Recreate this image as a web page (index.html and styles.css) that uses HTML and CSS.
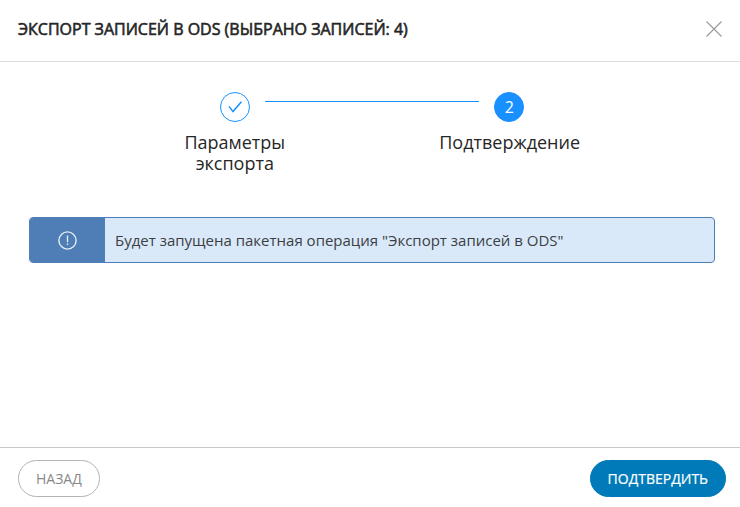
FILE: index.html
```html
<!DOCTYPE html>
<html lang="ru">
<head>
    <meta charset="UTF-8">
    <meta name="viewport" content="width=device-width, initial-scale=1.0">
    <title>Экспорт записей в ODS</title>
    <link rel="stylesheet" href="styles.css">
</head>
<body>
    <div class="modal" role="dialog" aria-labelledby="modalTitle">
        <header class="modal-header">
            <h1 class="modal-title" id="modalTitle">ЭКСПОРТ ЗАПИСЕЙ В ODS (ВЫБРАНО ЗАПИСЕЙ: 4)</h1>
            <button type="button" class="close-btn">
                <svg width="16" height="16" viewBox="0 0 16 16" fill="none" stroke="#999" stroke-width="1.1">
                    <path d="M0.5 0.5L15.5 15.5M15.5 0.5L0.5 15.5"/>
                </svg>
            </button>
        </header>

        <main class="modal-body">
            <ol class="steps">
                <li class="step step-done">
                    <span class="step-icon">
                        <svg width="14" height="12" viewBox="0 0 14 12" fill="none" stroke="#1890ff" stroke-width="1.5">
                            <path d="M1 5.4L5 10.6L13.4 0.8"/>
                        </svg>
                    </span>
                    <span class="step-label">Параметры экспорта</span>
                </li>
                <li class="step step-active">
                    <span class="step-icon">2</span>
                    <span class="step-label">Подтверждение</span>
                </li>
            </ol>

            <div class="alert">
                <div class="alert-icon">
                    <svg width="19" height="19" viewBox="0 0 19 19" fill="none" stroke="#e4ecf5" stroke-width="1.4">
                        <circle cx="9.5" cy="9.5" r="8.6"/>
                        <path d="M9.5 4.6V11.2M9.5 12.4V14"/>
                    </svg>
                </div>
                <p class="alert-text">Будет запущена пакетная операция "Экспорт записей в ODS"</p>
            </div>
        </main>

        <footer class="modal-footer">
            <button type="button" class="btn">НАЗАД</button>
            <button type="button" class="btn btn-primary">ПОДТВЕРДИТЬ</button>
        </footer>
    </div>
</body>
</html>
```

FILE: styles.css
```css
* {
    box-sizing: border-box;
}
body {
    margin: 0;
    background: #fff;
    color: #262626;
    font-family: "Open Sans", "Noto Sans", sans-serif;
}
.modal {
    display: flex;
    flex-direction: column;
    min-height: 100vh;
}
.modal-header {
    display: flex;
    align-items: center;
    justify-content: space-between;
    padding: 17px 18px 20px;
    border-bottom: 1px solid #dedede;
}
.modal-title {
    margin: 0;
    font-size: 16px;
    font-weight: 400;
    line-height: 24px;
    -webkit-text-stroke: 0.6px currentColor;
}
.close-btn {
    display: flex;
    padding: 0;
    border: none;
    background: none;
    cursor: pointer;
}
.modal-body {
    flex: 1;
    padding: 30px 25px 30px 29px;
}
.steps {
    display: flex;
    width: 80%;
    min-height: 125px;
    margin: 0 auto;
    padding: 0;
    list-style: none;
}
.step {
    display: flex;
    flex: 1;
    flex-direction: column;
    align-items: center;
    position: relative;
}
/* line between two steps */
.step + .step::before {
    content: "";
    position: absolute;
    top: 9px;
    right: calc(50% + 30px);
    width: calc(100% - 60px);
    height: 1px;
    background: #1890ff;
}
.step-icon {
    display: flex;
    align-items: center;
    justify-content: center;
    width: 30px;
    height: 30px;
    border: 1px solid #1890ff;
    border-radius: 50%;
    font-size: 16px;
    line-height: 24px;
}
.step-active .step-icon {
    background: #1890ff;
    color: #fff;
}
.step-label {
    max-width: 140px;
    margin-top: 10px;
    font-size: 18px;
    line-height: 21px;
    text-align: center;
}
.alert {
    display: flex;
    min-height: 46px;
    overflow: hidden;
    border: 1px solid #4f7eb7;
    border-radius: 4px;
    background: #d9e9f9;
}
.alert-icon {
    display: flex;
    align-items: center;
    justify-content: center;
    width: 75px;
    background: #4f7eb7;
}
.alert-text {
    flex: 1;
    margin: 0;
    padding: 10px;
    color: #3c4043;
    font-size: 15px;
    line-height: 24px;
}
.modal-footer {
    display: flex;
    justify-content: space-between;
    padding: 12px 14px 10px 18px;
    border-top: 1px solid #c8c8c8;
}
.btn {
    height: 37px;
    padding: 0 17px;
    border: 1px solid #b3b3b3;
    border-radius: 19px;
    background: #fff;
    color: #888;
    font-family: inherit;
    font-size: 14px;
    cursor: pointer;
}
.btn-primary {
    border-color: #007ab8;
    background: #007ab8;
    color: #fff;
    -webkit-text-stroke: 0.2px currentColor;
}
```
